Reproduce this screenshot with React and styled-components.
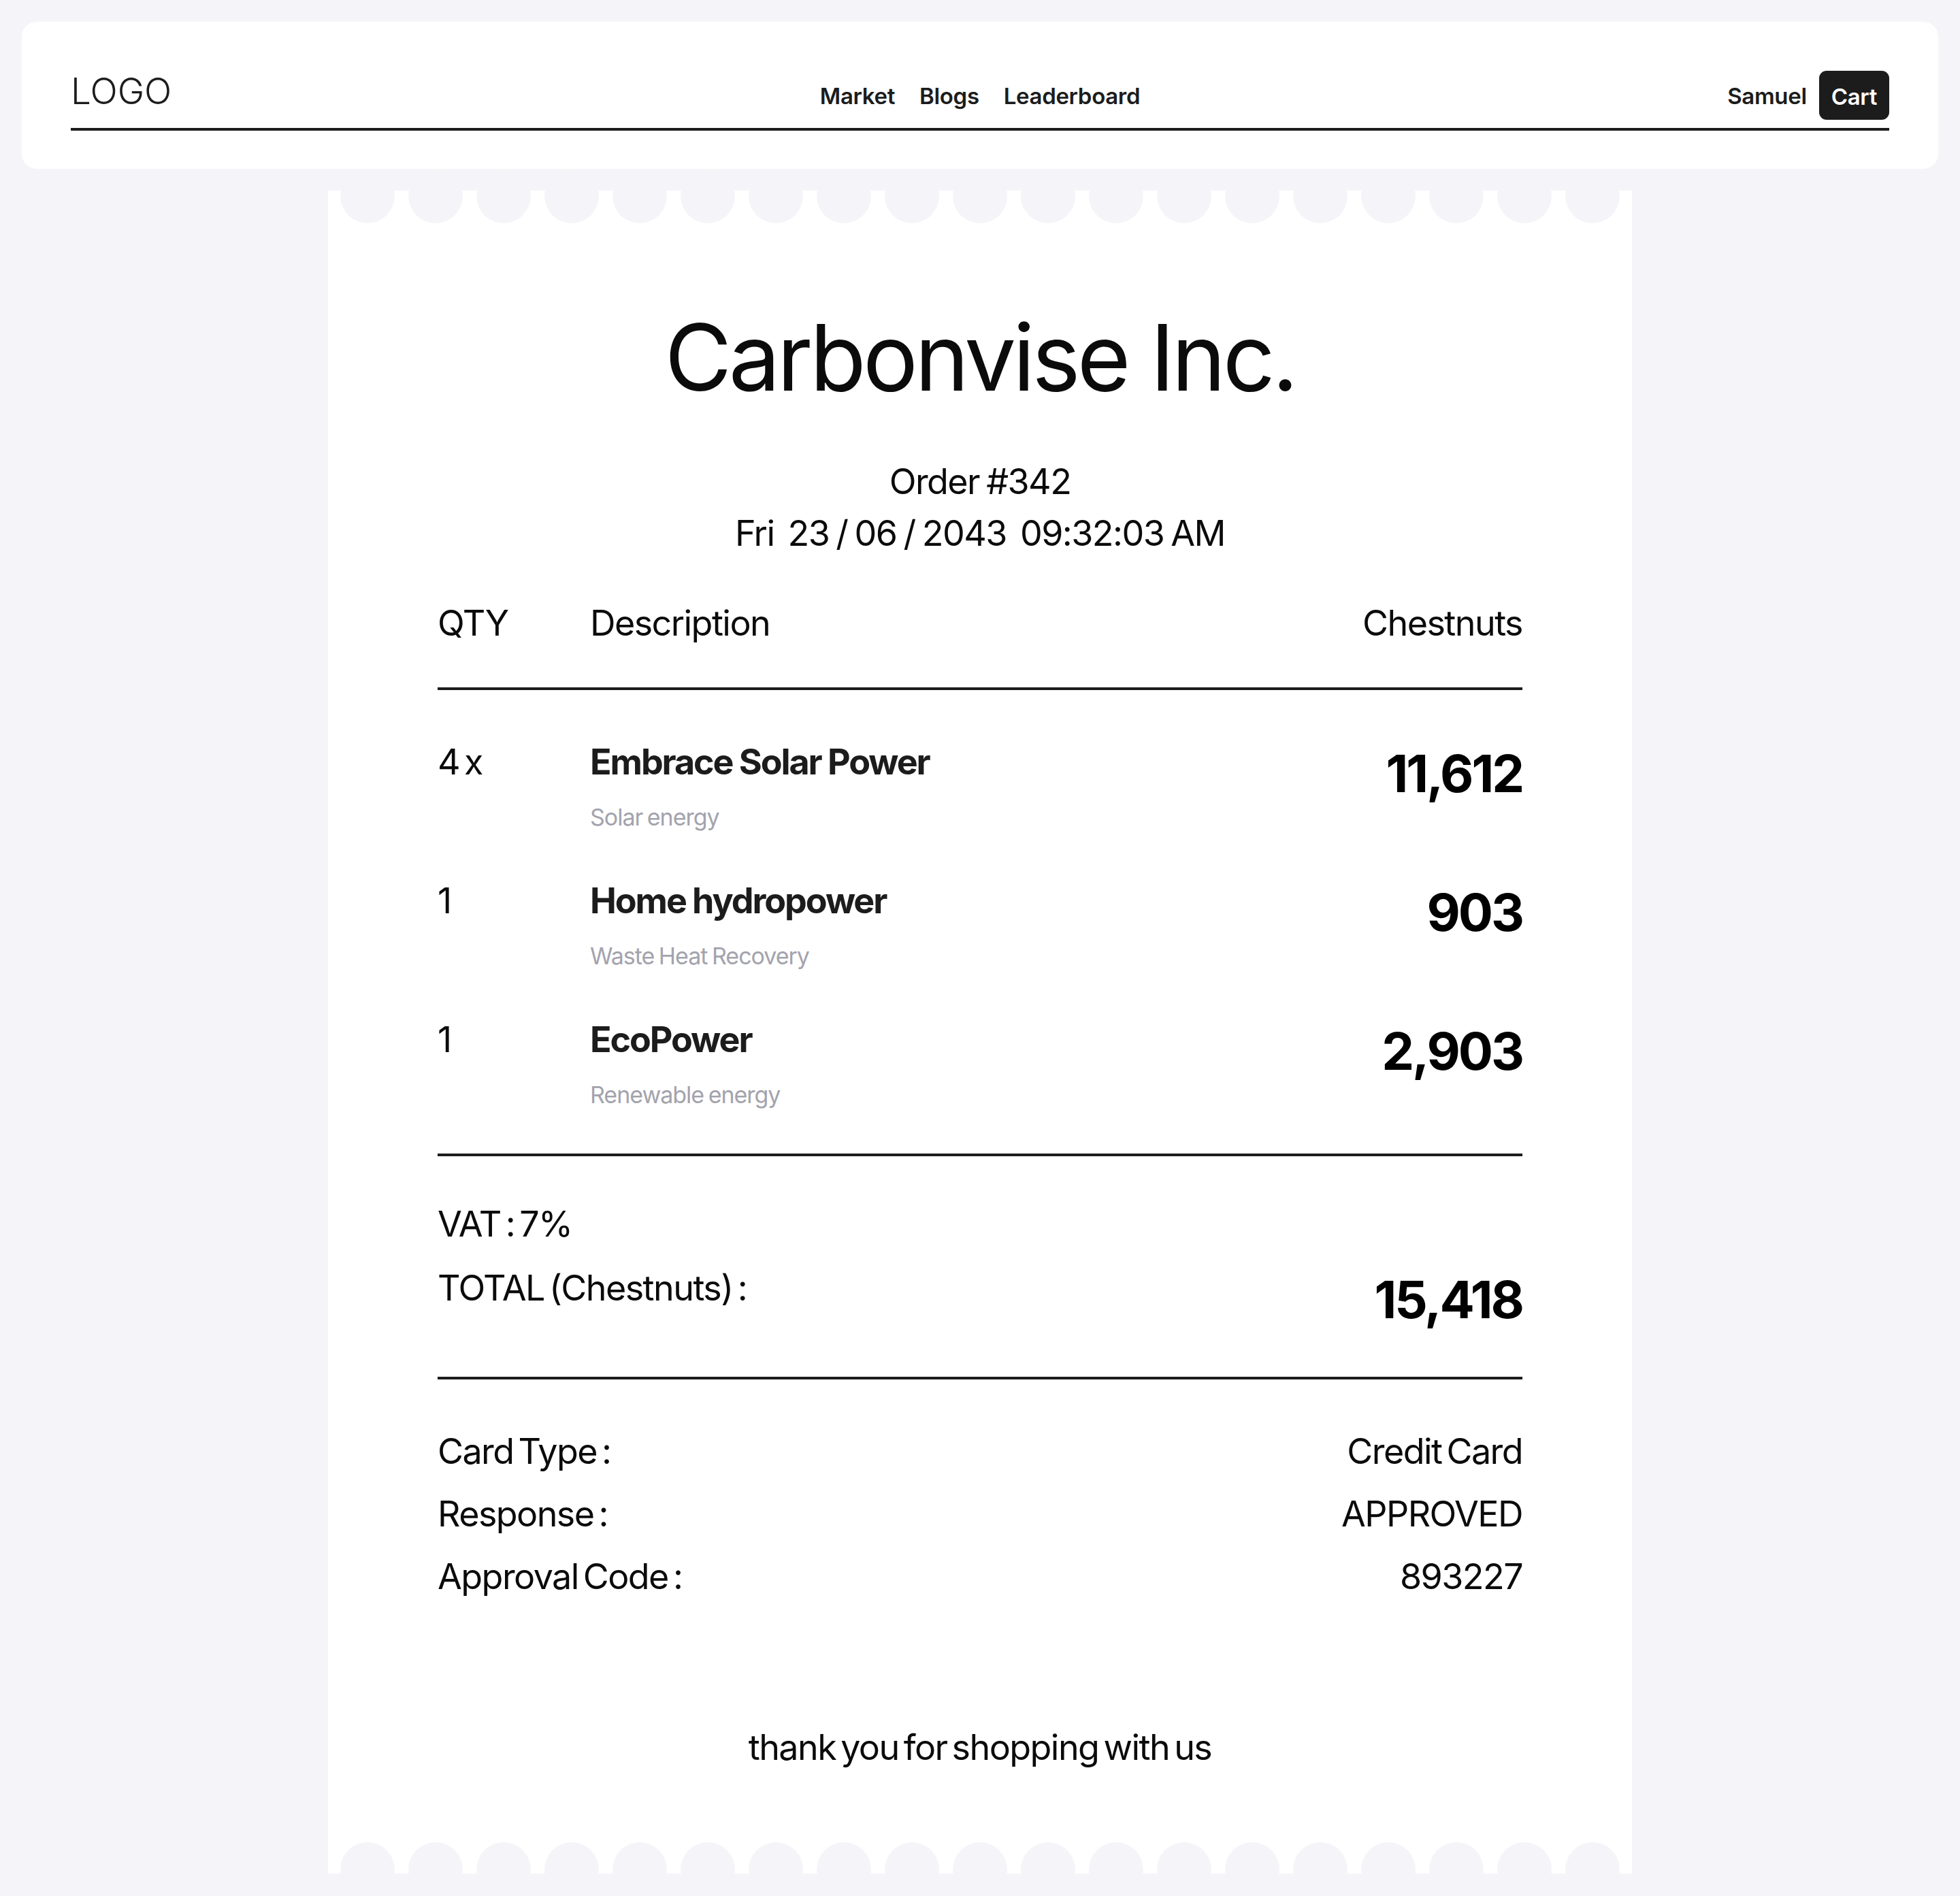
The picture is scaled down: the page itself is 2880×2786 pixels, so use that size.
import React from 'react'
import { styled, createGlobalStyle } from 'styled-components'

const GlobalStyle = createGlobalStyle`
  * { box-sizing: border-box; }
  body {
    margin: 0;
    background: #f5f5f9;
    font-family: Inter, "Noto Sans", sans-serif;
    color: #1c1c1c;
  }
`

const items = [
  { qty: '4 x', name: 'Embrace Solar Power', type: 'Solar energy', amount: '11,612' },
  { qty: '1', name: 'Home hydropower', type: 'Waste Heat Recovery', amount: '903' },
  { qty: '1', name: 'EcoPower', type: 'Renewable energy', amount: '2,903' },
]

const payment = [
  ['Card Type :', 'Credit Card'],
  ['Response :', 'APPROVED'],
  ['Approval Code :', '893227'],
]

const Scallops = ({ edge }) => (
  <ScallopRow $edge={edge}>
    {Array.from({ length: 19 }).map((_, i) => <Hole key={i} $edge={edge} />)}
  </ScallopRow>
)

const App = () => {
  return (
    <Page>
      <GlobalStyle />
      <Header>
        <NavRow>
          <Logo>LOGO</Logo>
          <Nav>
            <NavLink>Market</NavLink>
            <NavLink>Blogs</NavLink>
            <NavLink>Leaderboard</NavLink>
          </Nav>
          <UserBox>
            <NavLink>Samuel</NavLink>
            <CartButton>Cart</CartButton>
          </UserBox>
        </NavRow>
      </Header>

      <Receipt>
        <Scallops edge="top" />
        <Body>
          <Title>Carbonvise Inc.</Title>
          <Meta>
            <div>Order #342</div>
            <div>Fri&nbsp; 23 / 06 / 2043 &nbsp;09:32:03 AM</div>
          </Meta>

          <TableHead>
            <span>QTY</span>
            <span>Description</span>
            <RightText>Chestnuts</RightText>
          </TableHead>
          <Rule $top={56} />

          <ItemList>
            {items.map(item => (
              <ItemRow key={item.name}>
                <Qty>{item.qty}</Qty>
                <div>
                  <ItemName>{item.name}</ItemName>
                  <ItemType>{item.type}</ItemType>
                </div>
                <Amount>{item.amount}</Amount>
              </ItemRow>
            ))}
          </ItemList>
          <Rule $top={62} />

          <Totals>
            <Line>VAT : 7%</Line>
            <TotalRow>
              <Line>TOTAL (Chestnuts) :</Line>
              <Amount>15,418</Amount>
            </TotalRow>
          </Totals>
          <Rule $top={76} />

          <Payment>
            {payment.map(([label, value]) => (
              <PayRow key={label}>
                <span>{label}</span>
                <span>{value}</span>
              </PayRow>
            ))}
          </Payment>

          <Thanks>thank you for shopping with us</Thanks>
        </Body>
        <Scallops edge="bottom" />
      </Receipt>
    </Page>
  )
}

const Page = styled.div`
  padding: 32px;
  display: flex;
  flex-direction: column;
  align-items: center;
  gap: 32px;
`
const Header = styled.header`
  width: 100%;
  background: #fff;
  border-radius: 22px;
  padding: 72px 72px 56px;
`
const NavRow = styled.div`
  display: flex;
  justify-content: space-between;
  align-items: center;
  height: 88px;
  padding-bottom: 12px;
  border-bottom: 4px solid #1c1c1c;
`
const Logo = styled.div`
  flex: 1;
  align-self: flex-start;
  margin-top: 4px;
  font-size: 53px;
  font-weight: 300;
  line-height: 1;
`
const Nav = styled.nav`
  display: flex;
  gap: 36px;
`
const NavLink = styled.span`
  font-size: 33px;
  font-weight: 600;
  line-height: 1.2;
  padding-top: 4px;
  letter-spacing: -0.01em;
`
const UserBox = styled.div`
  flex: 1;
  display: flex;
  justify-content: flex-end;
  align-items: center;
  gap: 18px;
`
const CartButton = styled.button`
  height: 72px;
  padding: 4px 18px 0;
  border: none;
  border-radius: 11px;
  background: #1c1c1c;
  color: #fff;
  font-family: inherit;
  font-size: 33px;
  font-weight: 600;
  letter-spacing: -0.01em;
`
const Receipt = styled.main`
  width: 1916px;
  background: #fff;
  display: flex;
  flex-direction: column;
  color: #0b0b0b;
`
const ScallopRow = styled.div`
  display: flex;
  justify-content: center;
  gap: 20px;
  height: ${p => (p.$edge === 'top' ? 48 : 46)}px;
`
const Hole = styled.div`
  flex-shrink: 0;
  width: 80px;
  height: 80px;
  border-radius: 50%;
  background: #f5f5f9;
  margin-top: ${p => (p.$edge === 'top' ? -32 : 0)}px;
`
const Body = styled.div`
  padding: 130px 161px 101px;
  display: flex;
  flex-direction: column;
  font-size: 52px;
  line-height: 76px;
  letter-spacing: -0.03em;
  word-spacing: -6px;
`
const Title = styled.h1`
  margin: 0;
  text-align: center;
  font-size: 135px;
  font-weight: 400;
  line-height: 1;
  letter-spacing: -0.035em;
  word-spacing: 0;
`
const Meta = styled.div`
  margin-top: 77px;
  text-align: center;
  word-spacing: -3px;
`
const TableHead = styled.div`
  margin-top: 56px;
  display: grid;
  grid-template-columns: 224px 1fr auto;
`
const RightText = styled.span`
  text-align: right;
`
const Rule = styled.hr`
  margin: ${p => p.$top}px 0 0;
  border: none;
  height: 4px;
  background: #1c1c1c;
`
const ItemList = styled.div`
  margin-top: 68px;
  display: flex;
  flex-direction: column;
  gap: 61px;
`
const ItemRow = styled.div`
  display: grid;
  grid-template-columns: 224px 1fr auto;
  align-items: start;
`
const Qty = styled.span``
const ItemName = styled.div`
  font-weight: 700;
  letter-spacing: -0.04em;
  word-spacing: -1px;
  color: #1c1c1c;
`
const ItemType = styled.div`
  margin-top: 19px;
  font-size: 34px;
  line-height: 48px;
  color: #a3a3ad;
  letter-spacing: -0.03em;
  word-spacing: -2px;
`
const Amount = styled.div`
  margin-top: 16px;
  font-size: 76px;
  font-weight: 700;
  line-height: 1;
  letter-spacing: -0.04em;
  word-spacing: 0;
  text-align: right;
  color: #000;
`
const Totals = styled.div`
  margin-top: 62px;
  display: flex;
  flex-direction: column;
  gap: 18px;
`
const Line = styled.div``
const TotalRow = styled.div`
  display: flex;
  justify-content: space-between;
  align-items: flex-start;
`
const Payment = styled.div`
  margin-top: 60px;
  line-height: 92px;
`
const PayRow = styled.div`
  display: flex;
  justify-content: space-between;
`
const Thanks = styled.div`
  margin-top: 167px;
  text-align: center;
`

export default App
